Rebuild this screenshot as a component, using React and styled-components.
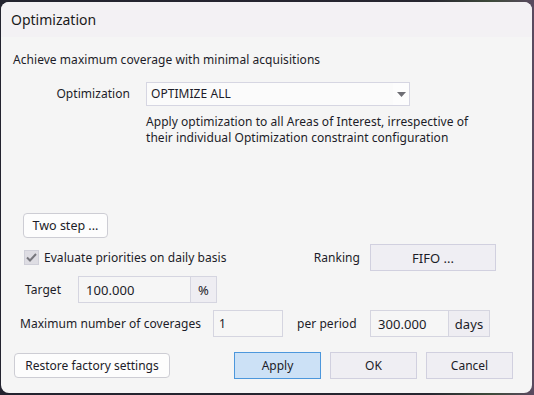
import React from "react";
import styled, { createGlobalStyle } from "styled-components";

const Global = createGlobalStyle`
  html, body { margin: 0; padding: 0; }
  body {
    width: 534px; height: 395px; overflow: hidden;
    background: linear-gradient(90deg, #23232f 0%, #262630 80%, #3d4a3a 92%, #5a4a60 100%);
    font-family: "Noto Sans", "Segoe UI", sans-serif;
    color: #1c1c28;
  }
`;

const Dialog = styled.div`
  margin: 2px 0 0 1px;
  width: 531px;
  height: 391px;
  border-radius: 8px;
  overflow: hidden;
  background: #f5f5f5;
  display: flex;
  flex-direction: column;
`;

const TitleBar = styled.div`
  height: 35px;
  background: #f3f1f4;
  display: flex;
  align-items: center;
  padding-left: 10px;
  font-size: 14px;
  color: #1a1a1a;
`;

const Body = styled.div`
  flex: 1;
  padding: 15px 12px 0 12px;
  display: flex;
  flex-direction: column;
  font-size: 12px;
  line-height: 16px;
  letter-spacing: 0.05px;
`;

const Text = styled.div`
  margin-top: ${(p) => p.$mt || 0}px;
  margin-left: ${(p) => p.$ml || 0}px;
`;

const Row = styled.div`
  display: flex;
  align-items: center;
  margin-top: ${(p) => p.$mt || 0}px;
  margin-left: ${(p) => p.$ml || 0}px;
  height: ${(p) => (p.$h ? `${p.$h}px` : "auto")};
`;

const Label = styled.span`
  display: inline-block;
  width: ${(p) => (p.$w ? `${p.$w}px` : "auto")};
  text-align: ${(p) => p.$align || "left"};
  margin-left: ${(p) => p.$ml || 0}px;
  margin-right: ${(p) => p.$mr || 0}px;
  white-space: nowrap;
`;

const Select = styled.div`
  margin-left: 16px;
  width: 264px;
  height: 24px;
  box-sizing: border-box;
  border: 1px solid #d6d6e2;
  background: #fbfbfb;
  display: flex;
  align-items: center;
  padding-left: 4px;
`;

const SelectValue = styled.span`
  flex: 1;
`;

const Arrow = styled.span`
  width: 16px;
  height: 22px;
  display: flex;
  align-items: center;
  justify-content: center;
  background: #fdfdfd;
`;

const Button = styled.button`
  font-family: inherit;
  font-size: ${(p) => p.$fs || 12}px;
  color: #1c1c28;
  box-sizing: border-box;
  width: ${(p) => p.$w}px;
  height: ${(p) => p.$h || 27}px;
  margin-left: ${(p) => p.$ml || 0}px;
  margin-right: ${(p) => p.$mr || 0}px;
  padding: 0;
  background: ${(p) => (p.$primary ? "#cce1f6" : p.$light ? "#fdfdfd" : "#efeef3")};
  border: 1px solid ${(p) => (p.$primary ? "#4c97dc" : p.$light ? "#cdcdd4" : "#d1d0df")};
  border-radius: ${(p) => (p.$light ? 4 : 0)}px;
`;

const CheckBox = styled.span`
  width: 15px;
  height: 15px;
  box-sizing: border-box;
  border: 1px solid #cfcfd8;
  background: #dedde3;
  display: flex;
  align-items: center;
  justify-content: center;
  margin-left: 11px;
  margin-right: 5px;
`;

const Field = styled.div`
  display: flex;
  height: 27px;
`;

const Input = styled.div`
  box-sizing: border-box;
  width: ${(p) => p.$w}px;
  height: 27px;
  border: 1px solid #d5d5e0;
  background: #f6f6f6;
  display: flex;
  align-items: center;
  padding-left: ${(p) => p.$pl || 6}px;
  font-size: ${(p) => p.$fs || 12}px;
`;

const Addon = styled.div`
  box-sizing: border-box;
  width: ${(p) => p.$w}px;
  height: 27px;
  border: 1px solid #d5d5e0;
  border-left: none;
  background: #eeedf2;
  display: flex;
  align-items: center;
  justify-content: center;
  font-size: 13px;
`;

const Footer = styled.div`
  display: flex;
  align-items: center;
  margin-top: 15px;
  height: 27px;
`;

const Spacer = styled.div`
  flex: 1;
`;

export default function App() {
  return (
    <>
      <Global />
      <Dialog>
        <TitleBar>Optimization</TitleBar>
        <Body>
          <Text>Achieve maximum coverage with minimal acquisitions</Text>
          <Row $mt={14}>
            <Label $w={117} $align="right">Optimization</Label>
            <Select>
              <SelectValue>OPTIMIZE ALL</SelectValue>
              <Arrow>
                <svg width="9" height="5" viewBox="0 0 9 5">
                  <path d="M0 0 L9 0 L4.5 5 Z" fill="#6e6e74" />
                </svg>
              </Arrow>
            </Select>
          </Row>
          <Text $mt={8} $ml={133}>
            Apply optimization to all Areas of Interest, irrespective of
            <br />
            their individual Optimization constraint configuration
          </Text>
          <Row $mt={67} $ml={10}>
            <Button $w={85} $h={25} $fs={12.5} $light>Two step ...</Button>
          </Row>
          <Row $mt={6} $h={27}>
            <CheckBox>
              <svg width="11" height="9" viewBox="0 0 11 9">
                <path d="M1 4.5 L4 7.5 L10 1" stroke="#77777d" strokeWidth="2" fill="none" />
              </svg>
            </CheckBox>
            <Label>Evaluate priorities on daily basis</Label>
            <Spacer />
            <Label $mr={10}>Ranking</Label>
            <Button $w={126} $mr={24} $fs={13}>FIFO ...</Button>
          </Row>
          <Row $mt={5}>
            <Label $ml={12} $w={53}>Target</Label>
            <Field>
              <Input $w={113} $pl={7} $fs={13}>100.000</Input>
              <Addon $w={26}>%</Addon>
            </Field>
          </Row>
          <Row $mt={7}>
            <Label $ml={7} $w={193}>Maximum number of coverages</Label>
            <Input $w={70} $pl={5}>1</Input>
            <Label $ml={14} $w={73}>per period</Label>
            <Field>
              <Input $w={79} $pl={7} $fs={13}>300.000</Input>
              <Addon $w={41}>days</Addon>
            </Field>
          </Row>
          <Footer>
            <Button $w={156} $h={25} $ml={1} $light>Restore factory settings</Button>
            <Spacer />
            <Button $w={87} $primary>Apply</Button>
            <Button $w={87} $ml={9}>OK</Button>
            <Button $w={87} $ml={9} $mr={7}>Cancel</Button>
          </Footer>
        </Body>
      </Dialog>
    </>
  );
}
